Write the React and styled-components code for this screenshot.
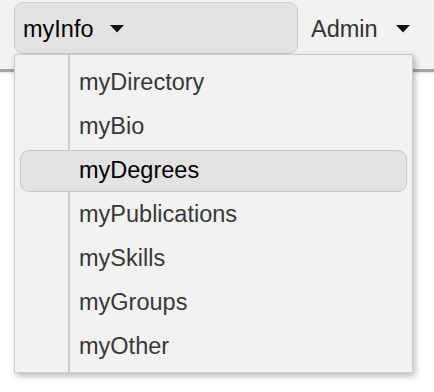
import React from 'react';
import styled, { createGlobalStyle } from 'styled-components';

const GlobalStyle = createGlobalStyle`
    body {
        margin: 0;
        background: #ffffff;
        font-family: "Liberation Sans", Arial, Helvetica, sans-serif;
    }
`;

const Page = styled.div`
    position: relative;
    width: 434px;
    height: 392px;
    overflow: hidden;
`;

const TopBar = styled.div`
    display: flex;
    align-items: flex-start;
    gap: 11px;
    height: 67px;
    padding: 2px 0 0 14px;
    background-color: #f2f2f2;
    border-bottom: 3px solid #a3a3a3;
    box-shadow: 0 1px 2px rgba(0, 0, 0, 0.15);
`;

const MenuButton = styled.div`
    display: flex;
    align-items: center;
    gap: ${(props) => props.gap || 13}px;
    box-sizing: border-box;
    width: ${(props) => props.width ? `${props.width}px` : 'auto'};
    height: 52px;
    padding: 2px 0 0 ${(props) => props.open ? 8 : 1}px;
    background-color: ${(props) => props.open ? '#e3e3e3' : 'transparent'};
    border: 1px solid ${(props) => props.open ? '#cdcdcd' : 'transparent'};
    border-radius: 9px;
    font-size: 23.5px;
    color: ${(props) => props.open ? '#000000' : '#333333'};
`;

const Caret = () => (
    <svg width="14" height="8" viewBox="0 0 14 8">
        <path d="M0 0 H14 L7 7.5 Z" fill="#111" />
    </svg>
);

const Dropdown = styled.div`
    position: absolute;
    left: 14px;
    top: 54px;
    width: 397px;
    padding: 5px 0 2px;
    background-color: #f2f2f2;
    border: 1px solid #cccccc;
    box-shadow: 2px 3px 6px rgba(0, 0, 0, 0.28);
    &::before {
        content: '';
        position: absolute;
        top: 0;
        bottom: 0;
        left: 53px;
        width: 2px;
        background-color: #cccccc;
    }
`;

const Item = styled.div`
    position: relative;
    display: flex;
    align-items: center;
    box-sizing: border-box;
    height: 42px;
    margin: 2px 5px;
    padding-left: 58px;
    padding-bottom: 1px;
    border: 1px solid ${(props) => props.active ? '#c9c9c9' : 'transparent'};
    border-radius: 9px;
    background-color: ${(props) => props.active ? '#e3e3e3' : 'transparent'};
    font-size: 23.5px;
    color: ${(props) => props.active ? '#000000' : '#383838'};
`;

const items = ['myDirectory', 'myBio', 'myDegrees', 'myPublications', 'mySkills', 'myGroups', 'myOther'];

function App() {
    return (
        <Page>
            <GlobalStyle />
            <TopBar>
                <MenuButton open width={284} gap={16}>myInfo <Caret /></MenuButton>
                <MenuButton gap={18}>Admin <Caret /></MenuButton>
            </TopBar>
            <Dropdown>
                {items.map((item) => (
                    <Item key={item} active={item === 'myDegrees'}>{item}</Item>
                ))}
            </Dropdown>
        </Page>
    );
}

export default App;
